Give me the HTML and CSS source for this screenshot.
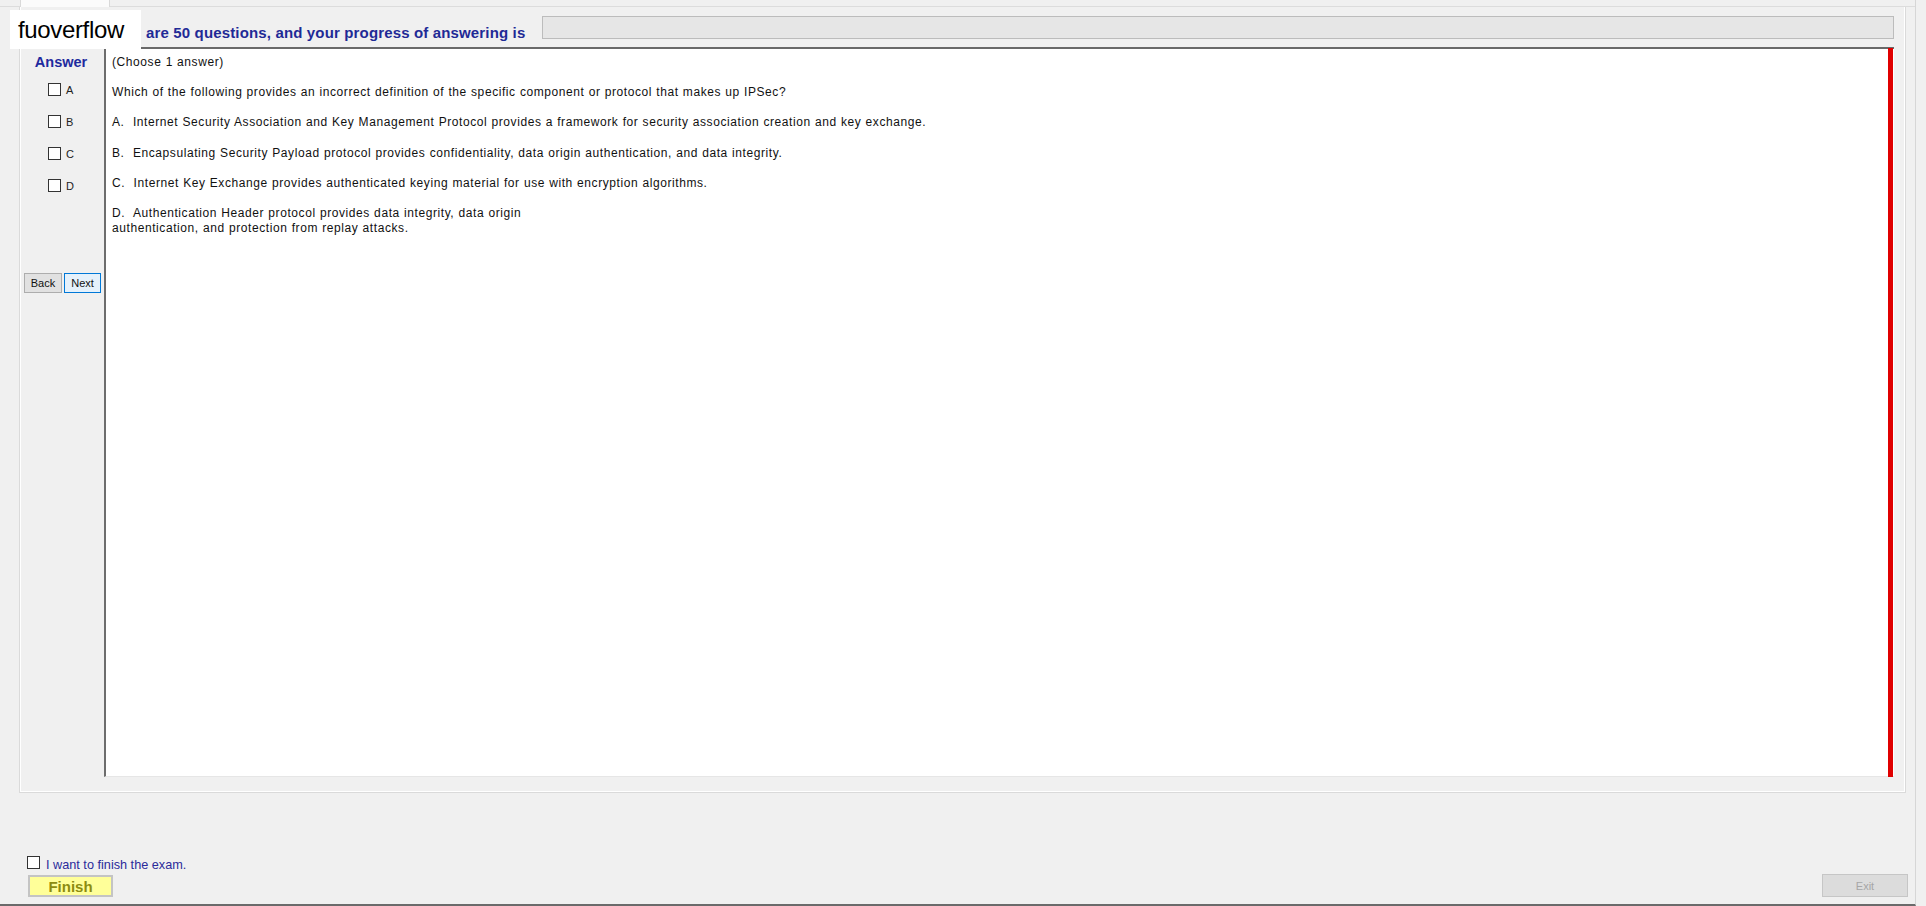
FILE: index.html
```html
<!DOCTYPE html>
<html>
<head>
<meta charset="utf-8">
<link rel="stylesheet" href="styles.css">
</head>
<body>
<div class="window">
  <div class="tabstrip"><div class="tab"></div></div>
  <div class="tabpage">
    <div class="header">
      <div class="progress-label">are 50 questions, and your progress of answering is</div>
      <div class="progress-bar"></div>
    </div>
    <div class="content">
      <div class="answer-col">
        <div class="answer-title">Answer</div>
        <label class="opt"><span class="box"></span><span>A</span></label>
        <label class="opt"><span class="box"></span><span>B</span></label>
        <label class="opt"><span class="box"></span><span>C</span></label>
        <label class="opt"><span class="box"></span><span>D</span></label>
        <div class="nav">
          <button class="btn back">Back</button>
          <button class="btn next">Next</button>
        </div>
      </div>
      <div class="question">
        <div class="qtext">
          <p>(Choose 1 answer)</p>
          <p>Which of the following provides an incorrect definition of the specific component or protocol that makes up IPSec?</p>
          <p>A.&nbsp; Internet Security Association and Key Management Protocol provides a framework for security association creation and key exchange.</p>
          <p>B.&nbsp; Encapsulating Security Payload protocol provides confidentiality, data origin authentication, and data integrity.</p>
          <p>C.&nbsp; Internet Key Exchange provides authenticated keying material for use with encryption algorithms.</p>
          <p>D.&nbsp; Authentication Header protocol provides data integrity, data origin<br>authentication, and protection from replay attacks.</p>
        </div>
        <div class="redbar"></div>
      </div>
    </div>
  </div>
  <div class="footer">
    <div class="finish-group">
      <label class="finish-check"><span class="box"></span><span class="finish-text">I want to finish the exam.</span></label>
      <button class="finish-btn">Finish</button>
    </div>
    <button class="exit-btn">Exit</button>
  </div>
  <div class="watermark">fuoverflow</div>
</div>
</body>
</html>
```

FILE: styles.css
```css
html, body {
  margin: 0;
  padding: 0;
  background: #f0f0f0;
}
body {
  font-family: "Liberation Sans", Arial, sans-serif;
  width: 1926px;
  height: 906px;
  overflow: hidden;
}
.window {
  position: relative;
  width: 1915px;
  height: 904px;
  border-right: 1px solid #d6d6d6;
  border-bottom: 2px solid #6a6a6a;
  background: #f0f0f0;
  display: flex;
  flex-direction: column;
}
.tabstrip {
  height: 7px;
  display: flex;
  border-bottom: 1px solid #dcdcdc;
  box-sizing: border-box;
}
.tab {
  margin-left: 20px;
  width: 90px;
  height: 7px;
  background: #fbfbfb;
  border: 1px solid #d9d9d9;
  border-top: none;
  border-bottom: none;
  box-sizing: border-box;
}
.tabpage {
  margin-left: 19px;
  width: 1887px;
  height: 786px;
  box-sizing: border-box;
  border: 1px solid #dadada;
  border-top: none;
  box-shadow: inset 1px 0 0 #ffffff, inset -1px -1px 0 #ffffff;
  padding: 9px 11px 15px 1px;
  display: flex;
  flex-direction: column;
}
.header {
  height: 23px;
  display: flex;
  align-items: center;
  padding-left: 125px;
}
.progress-label {
  width: 396px;
  font-size: 15px;
  font-weight: bold;
  letter-spacing: 0.15px;
  color: #1f2a96;
  white-space: nowrap;
  padding-top: 10px;
}
.progress-bar {
  flex: 1;
  height: 23px;
  box-sizing: border-box;
  background: #e6e6e6;
  border: 1px solid #bcbcbc;
}
.content {
  margin-top: 8px;
  flex: 1;
  display: flex;
}
.answer-col {
  width: 83px;
  display: flex;
  flex-direction: column;
  align-items: stretch;
}
.answer-title {
  font-size: 14.5px;
  font-weight: bold;
  color: #1f2a9e;
  text-align: center;
  padding-right: 3px;
  margin-top: 7px;
  height: 17px;
}
.opt {
  display: flex;
  align-items: center;
  gap: 5px;
  padding-left: 27px;
  height: 13px;
  margin-top: 19px;
  font-size: 11px;
  color: #222;
}
.opt:first-of-type {
  margin-top: 12px;
}
.box {
  width: 13px;
  height: 13px;
  box-sizing: border-box;
  border: 1px solid #333;
  background: #fff;
  display: inline-block;
}
.nav {
  margin-top: 81px;
  display: flex;
  gap: 2px;
  padding-left: 3px;
}
.btn {
  font-family: "Liberation Sans", Arial, sans-serif;
  font-size: 11px;
  height: 20px;
  padding: 0;
  box-sizing: border-box;
  color: #111;
}
.back {
  width: 38px;
  background: #e1e1e1;
  border: 1px solid #adadad;
}
.next {
  width: 37px;
  background: #e5f1fb;
  border: 1px solid #0078d7;
}
.question {
  flex: 1;
  display: flex;
  background: #fff;
  border-top: 2px solid #696969;
  border-left: 2px solid #6d6d6d;
  border-bottom: 1px solid #e6e6e6;
  padding-right: 1px;
}
.qtext {
  flex: 1;
  padding: 6px 0 0 6px;
  font-size: 12px;
  line-height: 15px;
  letter-spacing: 0.58px;
  word-spacing: 0.3px;
  color: #111;
}
.qtext p {
  margin: 0 0 15.2px 0;
}
.redbar {
  width: 5px;
  background: #e00000;
  margin-top: -1px;
  margin-bottom: -1px;
}
.footer {
  flex: 1;
  display: flex;
  justify-content: space-between;
  align-items: flex-end;
  padding: 0 7px 7px 27px;
}
.finish-group {
  display: flex;
  flex-direction: column;
  align-items: flex-start;
}
.finish-check {
  display: flex;
  align-items: flex-start;
  gap: 6px;
  font-size: 12.7px;
  color: #2b2b9b;
}
.finish-check .box {
  margin-top: 1px;
}
.finish-text {
  padding-top: 3px;
}
.finish-btn {
  margin-top: 3px;
  margin-left: 1px;
  width: 85px;
  height: 22px;
  box-sizing: border-box;
  background: #ffff99;
  border: 2px solid #c4c4c4;
  font-family: "Liberation Sans", Arial, sans-serif;
  font-size: 15px;
  font-weight: bold;
  color: #8c8c10;
  padding: 0;
}
.exit-btn {
  width: 86px;
  height: 23px;
  box-sizing: border-box;
  background: #dcdcdc;
  border: 1px solid #c6c6c6;
  font-family: "Liberation Sans", Arial, sans-serif;
  font-size: 11px;
  color: #a6a6a6;
  padding: 0;
}
.watermark {
  position: absolute;
  left: 10px;
  top: 10px;
  width: 131px;
  height: 39px;
  background: #fff;
  box-sizing: border-box;
  padding-left: 8px;
  font-family: "Liberation Sans", Arial, sans-serif;
  font-size: 24px;
  line-height: 39px;
  letter-spacing: -0.35px;
  color: #000;
}
```
